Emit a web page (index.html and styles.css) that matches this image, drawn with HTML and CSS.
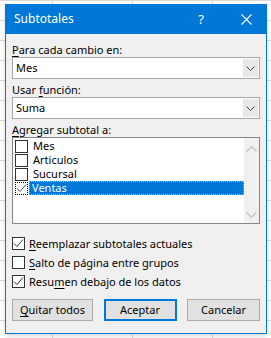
FILE: index.html
```html
<!DOCTYPE html>
<html lang="es">
<head>
<meta charset="utf-8">
<title>Subtotales</title>
<link rel="stylesheet" href="styles.css">
</head>
<body>
<div class="dialog">
  <div class="titlebar">
    <span class="title">Subtotales</span>
    <span class="help">?</span>
    <span class="close"><svg width="11" height="11" viewBox="0 0 11 11"><path d="M0.5 0.5 L10.5 10.5 M10.5 0.5 L0.5 10.5" stroke="#fff" stroke-width="1.1" fill="none"/></svg></span>
  </div>
  <div class="content">
    <div class="lbl lbl-first"><u>P</u>ara cada cambio en:</div>
    <div class="combo"><span class="val">Mes</span><span class="drop"><svg width="9" height="5" viewBox="0 0 9 5"><path d="M0.5 0.5 L4.5 4.5 L8.5 0.5" stroke="#444" stroke-width="1" fill="none"/></svg></span></div>
    <div class="lbl">Usar <u>f</u>unción:</div>
    <div class="combo"><span class="val">Suma</span><span class="drop"><svg width="9" height="5" viewBox="0 0 9 5"><path d="M0.5 0.5 L4.5 4.5 L8.5 0.5" stroke="#444" stroke-width="1" fill="none"/></svg></span></div>
    <div class="lbl"><u>A</u>gregar subtotal a:</div>
    <div class="list">
      <div class="items">
        <div class="item"><span class="cb"></span><span class="txt">Mes</span></div>
        <div class="item"><span class="cb"></span><span class="txt">Articulos</span></div>
        <div class="item"><span class="cb"></span><span class="txt">Sucursal</span></div>
        <div class="item sel"><span class="cb focus"><svg width="11" height="11" viewBox="0 0 11 11"><path d="M1 5.5 L4 8.5 L10 1.5" stroke="#555" stroke-width="1" fill="none"/></svg></span><span class="txt">Ventas</span></div>
      </div>
      <div class="scroll">
        <svg width="11" height="6" viewBox="0 0 11 6"><path d="M0.5 5.5 L5.5 0.8 L10.5 5.5" stroke="#c4c4c4" stroke-width="1.4" fill="none"/></svg>
        <svg width="11" height="6" viewBox="0 0 11 6"><path d="M0.5 0.5 L5.5 5.2 L10.5 0.5" stroke="#c4c4c4" stroke-width="1.4" fill="none"/></svg>
      </div>
    </div>
    <div class="checks">
      <div class="chk"><span class="box"><svg width="11" height="11" viewBox="0 0 11 11"><path d="M1 5.5 L4 8.5 L10 1.5" stroke="#333" stroke-width="1" fill="none"/></svg></span><span><u>R</u>eemplazar subtotales actuales</span></div>
      <div class="chk"><span class="box"></span><span><u>S</u>alto de página entre grupos</span></div>
      <div class="chk"><span class="box"><svg width="11" height="11" viewBox="0 0 11 11"><path d="M1 5.5 L4 8.5 L10 1.5" stroke="#333" stroke-width="1" fill="none"/></svg></span><span>Resu<u>m</u>en debajo de los datos</span></div>
    </div>
    <div class="buttons">
      <span class="btn btn-wide"><u>Q</u>uitar todos</span>
      <span class="btn btn-default">Aceptar</span>
      <span class="btn">Cancelar</span>
    </div>
  </div>
</div>
</body>
</html>
```

FILE: styles.css
```css
html, body {
  margin: 0;
  padding: 0;
}
body {
  width: 271px;
  height: 338px;
  overflow: hidden;
  background-color: #fff;
  background-image:
    linear-gradient(to right, #dadada 1px, transparent 1px),
    linear-gradient(to bottom, #dadada 1px, transparent 1px);
  background-size: 80px 20px;
  background-position: 52px 0, 0 0;
  font-family: "Noto Sans", "Liberation Sans", sans-serif;
  font-size: 11px;
  line-height: 14px;
  color: #000;
  padding-top: 4px;
  padding-left: 5px;
  box-sizing: border-box;
}
u { text-decoration: underline; text-underline-offset: 2px; }

.dialog {
  width: 262px;
  height: 330px;
  box-sizing: border-box;
  border: 1px solid #0078d7;
  background: #f0f0f0;
  display: flex;
  flex-direction: column;
  box-shadow: 0 2px 4px rgba(0,0,0,0.15);
}
.titlebar {
  height: 30px;
  margin-top: -1px;
  background: #0078d7;
  color: #fff;
  display: flex;
  align-items: center;
  padding-left: 8px;
}
.title { flex: 1; font-size: 12px; }
.help { width: 50px; text-align: center; font-size: 13px; }
.close { width: 40px; display: flex; justify-content: center; align-items: center; }

.content {
  padding: 0 6px 8px 6px;
  display: flex;
  flex-direction: column;
}
.lbl { line-height: 15px; margin-top: 3px; }
.lbl-first { margin-top: 8px; }

.combo {
  height: 22px;
  box-sizing: border-box;
  border: 1px solid #a6a6a6;
  background: #fff;
  display: flex;
  align-items: center;
}
.val { flex: 1; padding-left: 3px; }
.drop {
  width: 15px;
  height: 18px;
  margin-right: 1px;
  background: #e8e8e8;
  display: flex;
  align-items: center;
  justify-content: center;
}

.list {
  margin-top: 0;
  height: 87px;
  box-sizing: border-box;
  border: 1px solid #828790;
  background: #fff;
  display: flex;
}
.items { flex: 1; padding: 1px 0 0 2px; }
.item { height: 14px; display: flex; align-items: center; }
.cb {
  width: 13px;
  height: 13px;
  box-sizing: border-box;
  border: 1px solid #333;
  background: #fff;
  display: flex;
  align-items: center;
  justify-content: center;
}
.cb.focus { border: 1px dotted #000; }
.txt { margin-left: 3px; line-height: 14px; padding: 0 2px; flex: 0 0 auto; }
.sel .txt {
  flex: 1;
  margin-left: 1px;
  padding-left: 2px;
  background: #0078d7;
  color: #fff;
  box-sizing: border-box;
  height: 14px;
  line-height: 12px;
  border: 1px dotted #f7a35c;
}
.scroll {
  width: 15px;
  background: #f0f0f0;
  display: flex;
  flex-direction: column;
  justify-content: space-between;
  align-items: center;
  padding: 8px 0 5px;
}

.checks { margin-top: 10px; display: flex; flex-direction: column; }
.chk { height: 19px; display: flex; align-items: center; }
.box {
  width: 13px;
  height: 13px;
  box-sizing: border-box;
  border: 1px solid #333;
  background: #fff;
  display: flex;
  align-items: center;
  justify-content: center;
  margin-right: 4px;
}

.buttons {
  margin-top: 8px;
  display: flex;
  justify-content: space-between;
}
.btn {
  width: 73px;
  height: 22px;
  box-sizing: border-box;
  border: 1px solid #adadad;
  background: #e1e1e1;
  display: flex;
  align-items: center;
  justify-content: center;
}
.btn-wide { width: 81px; }
.btn-default { border: 2px solid #0078d7; }
```
